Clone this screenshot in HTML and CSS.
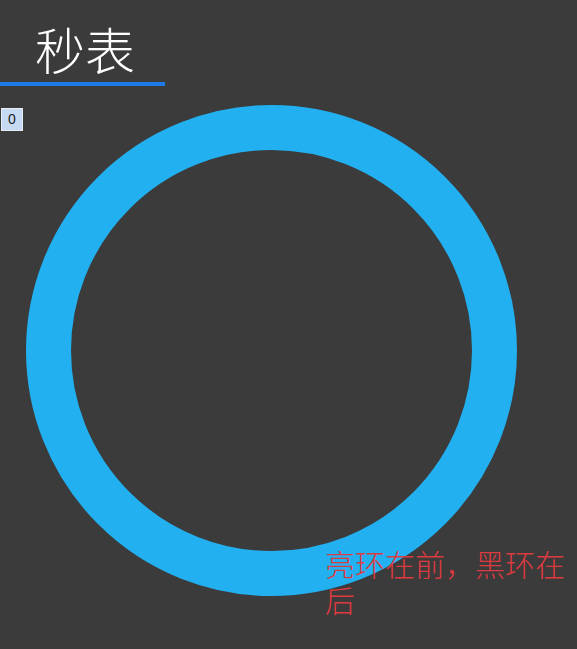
FILE: index.html
```html
<!DOCTYPE html>
<html lang="zh">
<head>
<meta charset="utf-8">
<title>秒表</title>
<link rel="stylesheet" href="styles.css">
</head>
<body>
<header class="title">
  <h1 class="title-text">秒表</h1>
</header>
<main class="stage">
  <span class="count">0</span>
  <div class="ring"></div>
  <p class="note">亮环在前，黑环在后</p>
</main>
</body>
</html>
```
FILE: styles.css
```css
html, body {
  margin: 0;
  padding: 0;
  background: #3b3b3b;
  height: 100%;
  overflow: hidden;
}
body {
  font-family: "Noto Sans CJK SC", "Noto Sans", sans-serif;
}
.title {
  width: 165px;
  border-bottom: 4px solid #1e7ae6;
  padding: 18px 0 4px 0;
}
.title-text {
  margin: 0 0 0 35px;
  font-size: 50px;
  line-height: 60px;
  font-weight: 300;
  color: #ffffff;
}
.stage {
  position: relative;
  display: flex;
  align-items: flex-start;
}
.count {
  margin: 22px 0 0 1px;
  width: 20px;
  height: 21px;
  border: 1px solid #e8eef6;
  background: #c6daf3;
  color: #1a1a1a;
  font-family: "Liberation Sans", Arial, sans-serif;
  font-size: 14px;
  line-height: 21px;
  text-align: center;
}
.ring {
  margin: 19px 0 0 3px;
  width: 401px;
  height: 401px;
  border: 45px solid #22b0f0;
  border-radius: 50%;
  flex: none;
}
.note {
  position: absolute;
  left: 325px;
  top: 459px;
  margin: 0;
  font-size: 30px;
  line-height: 36px;
  font-weight: 300;
  color: #dd3a40;
}
```
